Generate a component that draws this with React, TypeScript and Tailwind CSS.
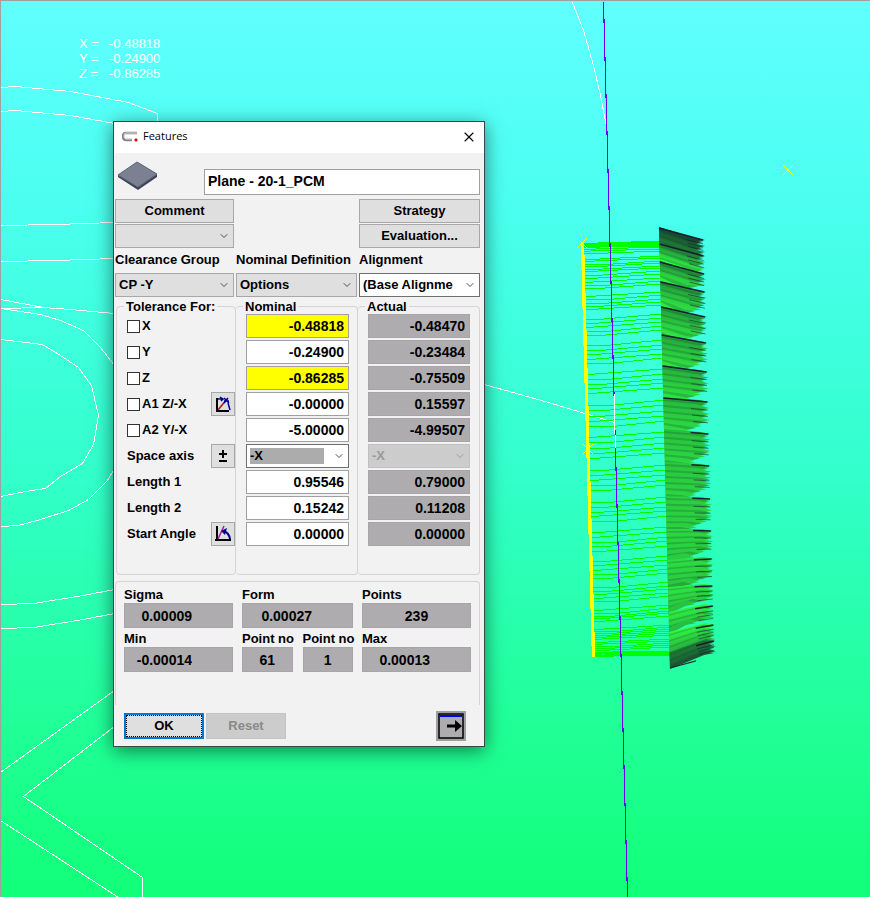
import { useId, type ComponentProps, type ReactNode } from "react";
import { ChevronDown, X } from "lucide-react";
import clsx from "clsx";
import { twMerge } from "tailwind-merge";

// left edge / right tip heights of each bundle of probing cones
const CONE_LEFT = [228, 244, 262, 282, 307, 335, 366, 398, 430, 463, 497, 530, 561, 588, 613, 633, 653, 668];
const CONE_RIGHT = [240, 256, 274, 292, 317, 343, 372, 402, 434, 466, 499, 531, 559, 586, 606, 625, 641, 655];

// [first, last, count, rise] of the scan lines on the plane
const SCANS = [
  [243, 247, 5, 1],
  [249, 253, 3, 2],
  [259, 271, 6, 3],
  [275, 288, 5, 4],
  [296, 309, 5, 4],
  [319, 335, 5, 5],
  [345, 363, 5, 5],
  [374, 393, 5, 5],
  [405, 426, 5, 5],
  [437, 458, 5, 5],
  [470, 490, 5, 5],
  [502, 521, 5, 5],
  [532, 551, 5, 5],
  [561, 578, 5, 5],
  [587, 601, 5, 5],
  [610, 621, 5, 5],
  [629, 639, 6, 4],
  [642, 650, 5, 3],
  [652, 656, 5, 1],
];

const OUTLINES = [
  "M0 87 L15 86 L70 91 L128 102 L157 113 V122",
  "M0 111 L15 110 L70 115 L114 123",
  "M0 225 L55 224 L114 222",
  "M0 261 L55 260 L114 258",
  "M0 299 L43 307",
  "M0 308 L43 307 L70 309 L114 313",
  "M0 308 L40 314 L60 320 L83 330 L100 347 L114 365",
  "M0 339 L42 344 L60 355 L78 367 L91 385 L98 415 L93 444 L82 463 L60 476 L45 488 L25 491 L0 496",
  "M114 468 L107 480 L88 499 L68 510 L40 519 L18 525 L0 526",
  "M0 604 L33 603 L83 595 L114 589",
  "M0 628 L33 627 L83 619 L114 613",
  "M0 772 L114 690",
  "M114 726 L23 796 L142 877 V897",
  "M0 820 L118 897",
  "M572 2 L583 30 L593 65 L600 95 L606 126",
  "M484 384 L548 402 L614 422",
];

const leftX = (y: number) => 659 + (y - 228) * 0.025;
const rightX = (y: number) => 703 + (y - 240) * 0.027;
const mix = (a: number, b: number, t: number) => a + (b - a) * t;

const ConeBundle = ({ index }: { index: number }) => {
  const [l0, l1] = [CONE_LEFT[index], CONE_LEFT[index + 1]];
  const [r0, r1] = [CONE_RIGHT[index], CONE_RIGHT[index + 1]];
  const lobed = index > 1 && index < 15;
  const edge = index < 1 || index > 15 ? 0.4 : 1;
  const count = Math.round((l1 - l0) / 2);
  // shade runs dark to bright in the upper bundles and flips towards the bottom
  const flip = index / 16;
  return (
    <g>
      {Array.from({ length: count }, (_, i) => {
        const t = i / (count - 1);
        const y = mix(l0, l1 - 2, t);
        const tip = mix(r0, r1 - 2, t);
        const light = mix(0.4 + 0.6 * t, 1 - 0.35 * t, flip) * edge;
        const shade = i % 3 === 1 ? light * 0.8 : light;
        const lobe = lobed && t > 0.65 ? (t - 0.65) * 55 : 0;
        const x = rightX(tip) - (i % 3) * 2 - lobe + 2;
        return (
          <polygon
            key={i}
            points={`${leftX(y)},${y - 1} ${x - 10},${tip - 2} ${x},${tip} ${x - 10},${tip + 2} ${leftX(y)},${y + 3}`}
            fill={`rgb(${mix(18, 50, shade)},${mix(40, 255, shade)},${mix(44, 70, shade)})`}
          />
        );
      })}
      {[0, 0.25, 0.45, 0.65].map((t) => {
        const y = mix(l0, l1, t);
        const tip = mix(r0, r1, t);
        const start = t === 0 && index < 8 ? 0 : mix(0.6, 0.7, t);
        return (
          <line
            key={t}
            x1={mix(leftX(y), rightX(tip), start)}
            y1={mix(y, tip, start)}
            x2={rightX(tip)}
            y2={tip}
            stroke="#17172f"
            strokeWidth={t === 0 ? 1.5 : 0.9}
            opacity={t === 0 ? 0.95 : 0.6}
          />
        );
      })}
      {index > 8 && (
        <line x1={leftX(l1)} y1={l1} x2={leftX(l1) + 26} y2={mix(l1, r1, 0.55)} stroke="#17172f" strokeWidth="1.2" opacity={flip * 0.9} />
      )}
    </g>
  );
};

const Star = ({ x, y }: { x: number; y: number }) => (
  <path d={`M${x - 5} ${y - 5} l10 10 m0 -10 l-10 10`} stroke="#ffff00" fill="none" shapeRendering="auto" />
);

const Scene = () => (
  <svg className="absolute inset-0 h-full w-full" shapeRendering="crispEdges" aria-hidden="true">
    <g fill="none" stroke="#fff" transform="translate(0.5 0.5)">
      {OUTLINES.map((d) => (
        <path key={d} d={d} />
      ))}
    </g>
    <g stroke="#00ff00" fill="none">
      {SCANS.flatMap(([from, to, count, rise]) =>
        Array.from({ length: count }, (_, i) => {
          const y = Math.round(mix(from, to, i / (count - 1)));
          const start = 583 + (y - 243) * 0.027;
          // each line climbs in one-pixel steps, the first one at a different spot per line
          const first = 8 + ((i * 17 + from * 7) % 22);
          const step = (76 - first) / Math.max(rise, 1);
          const climb = Array.from({ length: rise }, (_, n) => `H${Math.round(start + first + n * step)} m0 -1`).join(" ");
          return <path key={`${from}-${i}`} d={`M${start} ${y + 0.5} ${climb} H${leftX(y)}`} />;
        }),
      )}
    </g>
    <path d="M660 241 H640 L583 244 V247 H660 Z M594 656 H669 V651 L620 652 Z" fill="#00ff00" />
    <path d="M582.5 243 L593.5 657" stroke="#ffff00" strokeWidth="3.4" />
    <path d="M603.5 2 L627.5 897" stroke="#6a00f0" strokeWidth="1.1" />
    <path d="M614.5 394 V420 L615.5 448" stroke="#fff" fill="none" />
    <Star x={582} y={243} />
    <Star x={588} y={449} />
    <Star x={788} y={170} />
    <g shapeRendering="auto">
      {CONE_LEFT.slice(1).map((_, i) => (
        <ConeBundle key={i} index={i} />
      ))}
    </g>
  </svg>
);

const Readout = () => (
  <dl className="absolute left-[79px] top-9 grid grid-cols-[30px_auto] font-['Liberation_Sans',sans-serif] text-[13px] leading-[15px] text-white">
    <dt>X =</dt>
    <dd>-0.48818</dd>
    <dt>Y =</dt>
    <dd>-0.24900</dd>
    <dt>Z =</dt>
    <dd>-0.86285</dd>
  </dl>
);

const Button = ({ children, className, ...rest }: ComponentProps<"button">) => (
  <button
    type="button"
    className={twMerge("flex items-center justify-center border border-[#a8a8a8] bg-[#e0dfe0]", className)}
    {...rest}
  >
    {children}
  </button>
);

type SelectProps = { label: string; value: string; className?: string; disabled?: boolean };

const Select = ({ label, value, className, disabled }: SelectProps) => (
  <div className="relative h-6">
    <select
      aria-label={label}
      disabled={disabled}
      className={clsx("h-6 w-full appearance-none border pl-[3px] pr-5 outline-none", className)}
    >
      <option>{value}</option>
    </select>
    <ChevronDown
      className={clsx(
        "pointer-events-none absolute right-1 top-1.5 h-3 w-3",
        disabled ? "text-[#9a9a9a]" : "text-[#505050]",
      )}
      strokeWidth={2}
    />
  </div>
);

const GREY_SELECT = "border-[#a8a8a8] bg-[#e0dfe0]";

const Value = ({ label, value, className }: { label: string; value: string; className: string }) => (
  <input
    aria-label={label}
    defaultValue={value}
    className={clsx("h-6 w-full min-w-0 border px-1 text-right text-sm outline-none", className)}
  />
);

const ROWS = [
  { label: "X", nominal: "-0.48818", actual: "-0.48470", check: true, marked: true },
  { label: "Y", nominal: "-0.24900", actual: "-0.23484", check: true },
  { label: "Z", nominal: "-0.86285", actual: "-0.75509", check: true, marked: true },
  { label: "A1 Z/-X", nominal: "-0.00000", actual: "0.15597", check: true, icon: "angle" },
  { label: "A2 Y/-X", nominal: "-5.00000", actual: "-4.99507", check: true },
  { label: "Space axis", nominal: "-X", actual: "-X", select: true, icon: "sign" },
  { label: "Length 1", nominal: "0.95546", actual: "0.79000" },
  { label: "Length 2", nominal: "0.15242", actual: "0.11208" },
  { label: "Start Angle", nominal: "0.00000", actual: "0.00000", icon: "start" },
];

const RowIcon = ({ kind }: { kind: string }) => {
  if (kind === "sign") {
    return (
      <svg width="16" height="16" aria-hidden="true">
        <path d="M8 2 V10 M4 6 H12 M4 13 H12" stroke="#000" strokeWidth="2" />
      </svg>
    );
  }
  if (kind === "angle") {
    return (
      <svg width="18" height="18" fill="none" aria-hidden="true">
        <path d="M3 3 V16 M2 16 H15" stroke="#000" strokeWidth="2" />
        <path d="M4 15 L13 4" stroke="#a01020" strokeWidth="1.5" />
        <path d="M4 4 H8 M6 2 L9 4 L7 6" stroke="#000090" strokeWidth="1.5" />
        <path d="M10 3 L15 8 M14 3 L10 8 M10 6 H15 M14 8 L16 15" stroke="#000090" strokeWidth="1.5" />
      </svg>
    );
  }
  return (
    <svg width="18" height="18" fill="none" aria-hidden="true">
      <path d="M3 1 V16 M1 15 H17" stroke="#000" strokeWidth="2" />
      <path d="M4 14 L10 1" stroke="#a020a0" strokeWidth="1.5" />
      <path d="M10 6 Q15 8 16 14" stroke="#000090" strokeWidth="2" />
      <path d="M7 6 L13 3 L11 10 Z" fill="#000090" />
    </svg>
  );
};

const Group = ({ title, children, className }: { title: string; children: ReactNode; className?: string }) => (
  <fieldset className={clsx("min-w-0 rounded-sm border border-[#d4d4d4] pb-7", className)}>
    <legend className="-ml-[3px] h-[15px] px-0.5 leading-[15px]">{title}</legend>
    <div className="flex flex-col gap-0.5">{children}</div>
  </fieldset>
);

const ToleranceTable = () => {
  const id = useId();
  return (
    <div className="mt-0.5 grid grid-cols-[120fr_122fr_122fr] pl-px">
      <Group title="Tolerance For:" className="pl-2.5">
        {ROWS.map((row, i) => (
          <div key={row.label} className="flex h-6 items-center gap-0.5">
            {row.check ? (
              <>
                <input
                  id={`${id}${i}`}
                  type="checkbox"
                  className="h-[13px] w-[13px] shrink-0 appearance-none border border-[#333] bg-white checked:bg-[#333]"
                />
                <label htmlFor={`${id}${i}`}>{row.label}</label>
              </>
            ) : (
              <span className="whitespace-nowrap">{row.label}</span>
            )}
            {row.icon && (
              <Button className="ml-auto h-6 w-6" aria-label={`${row.label} options`}>
                <RowIcon kind={row.icon} />
              </Button>
            )}
          </div>
        ))}
      </Group>
      <Group title="Nominal" className="border-l-0 pl-2.5 pr-2">
        {ROWS.map((row) =>
          row.select ? (
            <Select
              key={row.label}
              label="Nominal space axis"
              value={row.nominal}
              className="border-[#707070] bg-white bg-[linear-gradient(#acacac,#acacac)] bg-[length:74px_16px] bg-[position:3px_3px] bg-no-repeat"
            />
          ) : (
            <Value
              key={row.label}
              label={`${row.label} nominal`}
              value={row.nominal}
              className={clsx("border-[#a0a0a0]", row.marked ? "bg-[#ffff00]" : "bg-white")}
            />
          ),
        )}
      </Group>
      <Group title="Actual" className="border-l-0 pl-2.5 pr-[9px]">
        {ROWS.map((row) =>
          row.select ? (
            <Select
              key={row.label}
              label="Actual space axis"
              value={row.actual}
              disabled
              className="border-[#c0c0c0] bg-[#cccccc] text-[#9a9a9a] opacity-100"
            />
          ) : (
            <Value
              key={row.label}
              label={`${row.label} actual`}
              value={row.actual}
              className="border-[#a6a6a6] bg-[#aeacae]"
            />
          ),
        )}
      </Group>
    </div>
  );
};

type StatProps = { label: string; value: string; centered?: boolean };

const Stat = ({ label, value, centered }: StatProps) => (
  <label className="flex min-w-0 flex-col whitespace-nowrap leading-4">
    {label}
    <input
      readOnly
      value={value}
      className={clsx(
        "h-[25px] w-full border border-[#a6a6a6] bg-[#aeacae] text-sm outline-none",
        centered ? "text-center" : "pr-10 text-right",
      )}
    />
  </label>
);

const Statistics = () => (
  <div className="mt-1.5 h-[124px] rounded-t-sm border border-b-0 border-[#d4d4d4] px-2 pt-[5px]">
    <div className="grid grid-cols-[109fr_111fr_109fr] gap-x-[9px] gap-y-[3px]">
      <Stat label="Sigma" value="0.00009" />
      <Stat label="Form" value="0.00027" />
      <Stat label="Points" value="239" centered />
      <Stat label="Min" value="-0.00014" />
      <div className="grid grid-cols-2 gap-2.5">
        <Stat label="Point no" value="61" centered />
        <Stat label="Point no" value="1" centered />
      </div>
      <Stat label="Max" value="0.00013" />
    </div>
  </div>
);

const TitleBar = () => (
  <header className="flex h-[31px] items-center bg-white pl-2 pr-[7px] pb-0.5">
    <svg width="18" height="14" fill="none" aria-hidden="true">
      <path d="M15 3 H4 Q1 3 1 6 Q1 10 4 10 H10" stroke="#858585" strokeWidth="2.5" />
      <path d="M15 3 H4 Q2 3 2 6 Q2 9 4 9 H10" stroke="#d8dcd8" />
      <path d="M14 8 L16 10 L14 12 L12 10 Z" fill="#e01010" />
    </svg>
    <h1 className="ml-[3px] font-['Open_Sans',sans-serif] text-[11px] font-normal">Features</h1>
    <button type="button" aria-label="Close" className="ml-auto">
      <X className="h-4 w-4" strokeWidth={1.6} />
    </button>
  </header>
);

const PlaneIcon = () => (
  <svg width="40" height="30" aria-hidden="true">
    <path d="M0 14 L20 26 L39 13 V16 L20 29 L0 16 Z" fill="#3f4455" />
    <path d="M0 14 L19 1 L39 13 L20 26 Z" fill="#7b8192" stroke="#5c6274" />
  </svg>
);

const FeaturesDialog = () => (
  <section
    role="dialog"
    aria-label="Features"
    className="absolute left-[113px] top-[121px] w-[372px] border border-[#35484a] bg-[#f3f2f3] font-['Liberation_Sans',sans-serif] text-[13px] font-bold text-black shadow-[0_4px_18px_rgba(0,0,0,0.5)]"
  >
    <TitleBar />
    <div className="pl-px pr-1">
      <div className="flex h-[46px] gap-[46px] pl-[3px] pt-2">
        <PlaneIcon />
        <input
          aria-label="Feature name"
          defaultValue="Plane - 20-1_PCM"
          className="mt-2 h-[26px] min-w-0 flex-1 border border-[#a0a0a0] bg-white px-[3px] pb-0.5 text-sm outline-none"
        />
      </div>
      <div className="grid grid-cols-[119fr_121fr_121fr] gap-x-0.5 gap-y-px">
        <Button className="h-6">Comment</Button>
        <Button className="col-start-3 h-6">Strategy</Button>
        <Select label="Comment text" value="" className={GREY_SELECT} />
        <Button className="col-start-3 h-6">Evaluation...</Button>
        {["Clearance Group", "Nominal Definition", "Alignment"].map((title) => (
          <span key={title} className="h-[23px] whitespace-nowrap leading-[21px]">
            {title}
          </span>
        ))}
        <Select label="Clearance Group" value="CP -Y" className={GREY_SELECT} />
        <Select label="Nominal Definition" value="Options" className={GREY_SELECT} />
        <Select label="Alignment" value="(Base Alignme" className="border-[#707070] bg-white" />
      </div>
      <ToleranceTable />
      <Statistics />
      <div className="flex items-center gap-0.5 pb-[5px] pl-[9px] pr-3.5 pt-1.5">
        <Button className="h-[26px] w-20 border-2 border-[#0078d7] outline-1 -outline-offset-3 outline-dotted outline-black">
          OK
        </Button>
        <Button disabled className="h-[26px] w-20 border-[#c4c4c4] bg-[#cccccc] text-[#8a8a8a]">
          Reset
        </Button>
        <button type="button" aria-label="Next" className="ml-auto bg-[#a0a0a0] p-0.5">
          <svg width="26" height="26" aria-hidden="true">
            <rect x="1" y="1" width="24" height="24" fill="#aeacae" stroke="#000" strokeWidth="1.5" />
            <path d="M2 3 H24" stroke="#0000ff" strokeWidth="2" />
            <path d="M9 13 H19" stroke="#000" strokeWidth="3" />
            <path d="M17 7 L24 13 L17 19 Z" />
          </svg>
        </button>
      </div>
    </div>
  </section>
);

export default function App() {
  return (
    <main className="relative min-h-screen overflow-hidden bg-[linear-gradient(#60ffff,#4bfff0_22%,#33ffcc_52%,#22ff9c_78%,#12ff78)]">
      <Scene />
      <div className="pointer-events-none absolute inset-0 border-l border-t border-[#a0a0a0]" />
      <Readout />
      <FeaturesDialog />
    </main>
  );
}
